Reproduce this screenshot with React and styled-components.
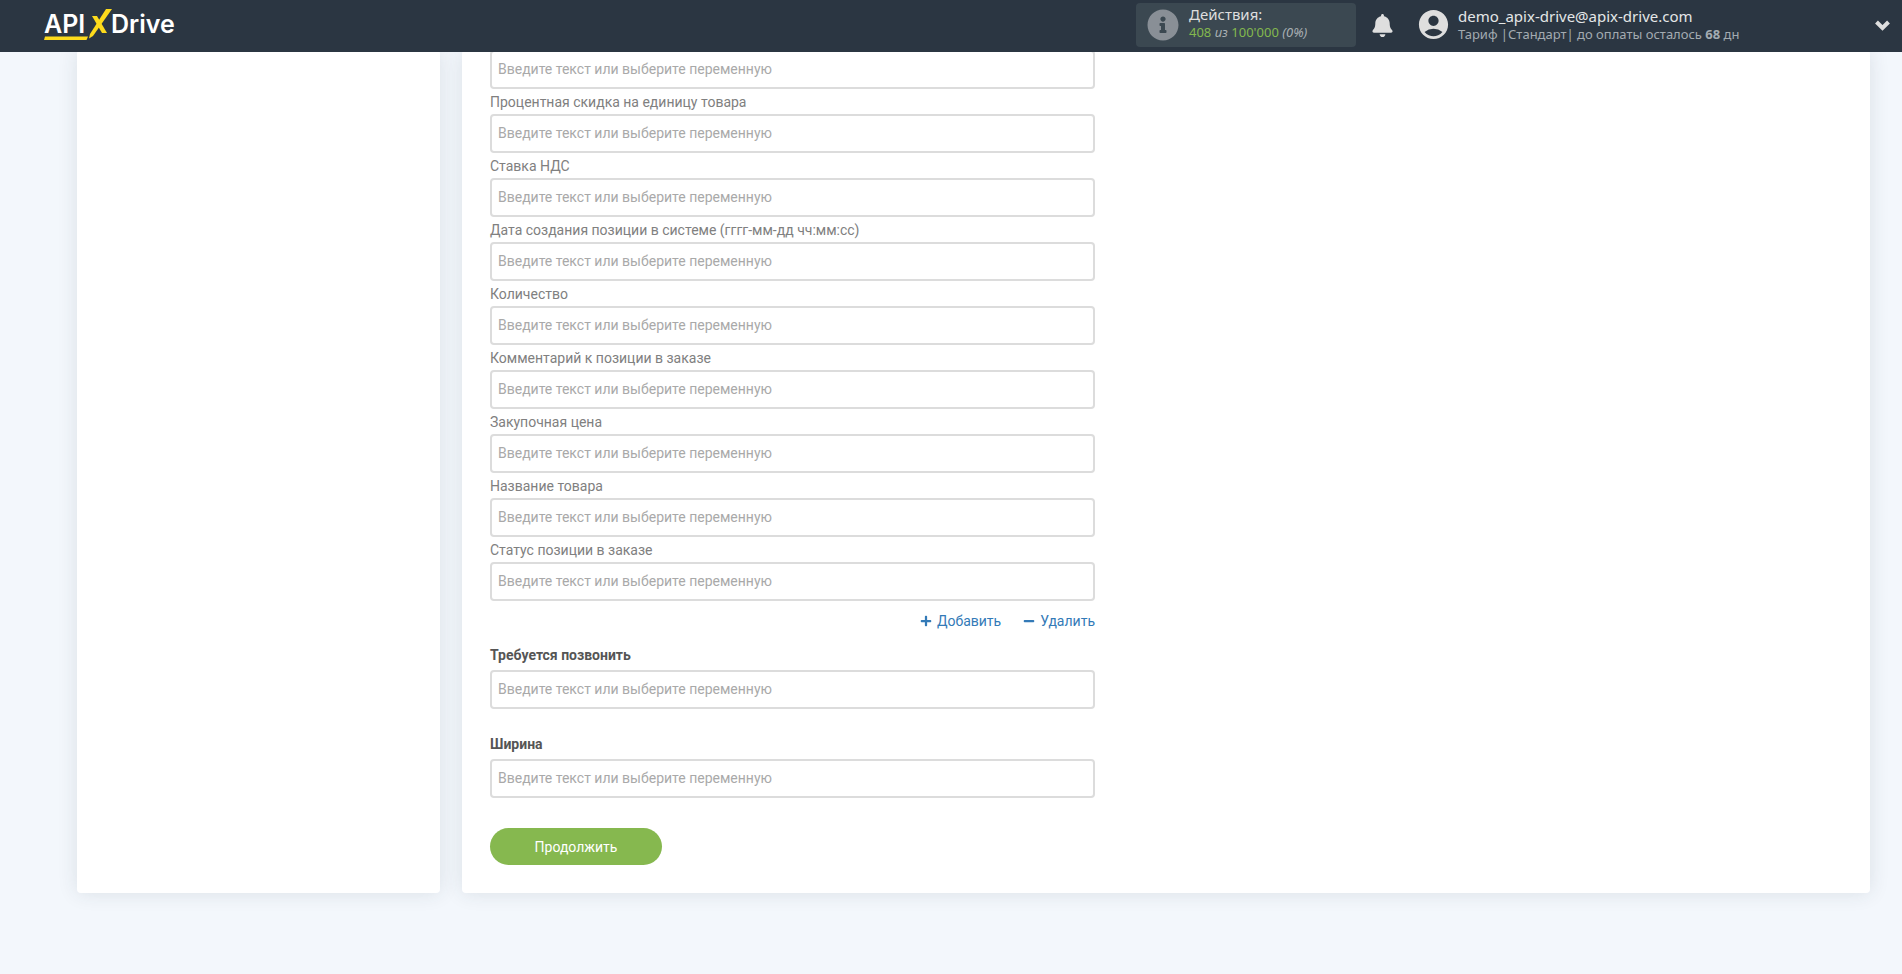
import React, { useId } from 'react'
import styled, { createGlobalStyle } from 'styled-components'
import { FaBell, FaInfoCircle, FaPlus, FaMinus } from 'react-icons/fa'
import { MdAccountCircle } from 'react-icons/md'

const itemFields = [
  'Процентная скидка на единицу товара',
  'Ставка НДС',
  'Дата создания позиции в системе (гггг-мм-дд чч:мм:сс)',
  'Количество',
  'Комментарий к позиции в заказе',
  'Закупочная цена',
  'Название товара',
  'Статус позиции в заказе',
]

const orderFields = ['Требуется позвонить', 'Ширина']

function App() {
  return (
    <>
      <GlobalStyle />
      <Header>
        <LogoLink href="#" aria-label="APIXDrive">
          <Logo />
        </LogoLink>
        <Actions>
          <InfoIcon />
          <ActionsText>
            <ActionsTitle>Действия:</ActionsTitle>
            <ActionsCount>
              <Green>408</Green> <em>из</em> <Green>100'000</Green> <em>(0%)</em>
            </ActionsCount>
          </ActionsText>
        </Actions>
        <BellButton aria-label="Уведомления">
          <FaBell />
        </BellButton>
        <Account aria-label="Аккаунт">
          <UserIcon />
          <AccountText>
            <Email>demo_apix-drive@apix-drive.com</Email>
            <Tariff>
              Тариф |Стандарт| до оплаты осталось <b>68</b> дн
            </Tariff>
          </AccountText>
          <Chevron />
        </Account>
      </Header>
      <Page>
        <Panel as="aside" />
        <Panel>
          <Form onSubmit={(e) => e.preventDefault()}>
            <Input aria-label="Скидка" placeholder="Введите текст или выберите переменную" />
            {itemFields.map((label) => (
              <ItemField key={label} label={label} />
            ))}
            <RowActions>
              <RowLink href="#">
                <FaPlus size={12} />
                Добавить
              </RowLink>
              <RowLink href="#">
                <FaMinus size={12} />
                Удалить
              </RowLink>
            </RowActions>
            {orderFields.map((label) => (
              <OrderField key={label} label={label} />
            ))}
            <Submit>Продолжить</Submit>
          </Form>
        </Panel>
      </Page>
    </>
  )
}

function ItemField({ label }) {
  const id = useId()
  return (
    <div>
      <ItemLabel htmlFor={id}>{label}</ItemLabel>
      <Input id={id} placeholder="Введите текст или выберите переменную" />
    </div>
  )
}

function OrderField({ label }) {
  const id = useId()
  return (
    <OrderRow>
      <OrderLabel htmlFor={id}>{label}</OrderLabel>
      <Input id={id} placeholder="Введите текст или выберите переменную" />
    </OrderRow>
  )
}

function Logo() {
  return (
    <svg width="136" height="32" viewBox="0 0 136 32">
      <g fill="#fff" fontFamily="Inter, sans-serif" fontSize="25" fontWeight="600">
        <text x="0" y="24">API</text>
        <text x="67" y="24">Drive</text>
      </g>
      <path d="M1 27.500h43l-1.500 3.500H0z" fill="#fddb1c" />
      <path d="M62 0h6L49 27l-4 2.500 1-4.500z" fill="#fddb1c" />
      <path d="M48 7h5l10 17h-5z" fill="#fddb1c" />
    </svg>
  )
}

function Chevron() {
  return (
    <svg width="15" height="11" viewBox="0 0 15 11" fill="none" stroke="#dedede" strokeWidth="4">
      <path d="M1.500 2l6 6 6-6" />
    </svg>
  )
}

const GlobalStyle = createGlobalStyle`
  * {
    box-sizing: border-box;
  }

  body {
    margin: 0;
    background: #f3f7fc;
    font-family: Roboto, sans-serif;
    font-size: 14px;
    line-height: 20px;
  }

  button {
    font: inherit;
    border: 0;
    cursor: pointer;
  }
`

const Header = styled.header`
  position: sticky;
  top: 0;
  z-index: 1;
  display: flex;
  align-items: center;
  height: 52px;
  padding: 0 12px 2px 44px;
  background: #2b3642;
  font-family: 'Noto Sans', sans-serif;
`

const LogoLink = styled.a`
  display: flex;
  margin-right: auto;
`

const Actions = styled.div`
  display: flex;
  align-items: center;
  gap: 10px;
  width: 220px;
  height: 44px;
  padding: 0 11px;
  border-radius: 4px;
  background: #3b4851;
`

const InfoIcon = styled(FaInfoCircle)`
  width: 32px;
  height: 32px;
  color: #898f96;
`

const ActionsText = styled.div`
  padding-bottom: 4px;
`

const ActionsTitle = styled.div`
  color: #dedede;
  font-size: 15px;
  line-height: 18px;
`

const ActionsCount = styled.div`
  color: #a9afb3;
  font-size: 13px;
  line-height: 18px;
`

const Green = styled.span`
  color: #83b84e;
`

const BellButton = styled.button`
  display: flex;
  margin: 0 22px 0 15px;
  padding: 0;
  background: none;
  color: #dedede;
  font-size: 23px;
`

const Account = styled.button`
  display: flex;
  align-items: center;
  width: 474px;
  padding: 0;
  background: none;
  text-align: left;
`

const UserIcon = styled(MdAccountCircle)`
  width: 35px;
  height: 35px;
  margin-bottom: 2px;
  color: #dedede;
`

const AccountText = styled.span`
  display: grid;
  margin: 0 auto 0 7px;
`

const Email = styled.span`
  color: #e4e6e7;
  font-size: 15px;
  line-height: 18px;
`

const Tariff = styled.span`
  color: #a3abb1;
  font-size: 13px;
  line-height: 18px;
`

const Page = styled.main`
  display: grid;
  grid-template-columns: 363px 1fr;
  gap: 22px;
  margin-top: -2px;
  padding: 0 32px 80px 77px;
`

const Panel = styled.section`
  padding: 0 28px 28px;
  border-radius: 4px;
  background: #fff;
  box-shadow: 0 0 20px rgba(43, 54, 66, 0.12);
`

const Form = styled.form`
  max-width: 605px;
`

const Input = styled.input`
  display: block;
  width: 100%;
  height: 39px;
  padding: 0 6px 2px;
  border: 2px solid #dcdcdc;
  border-radius: 4px;
  background: #fff;
  color: #555;
  font: inherit;

  &::placeholder {
    color: #a9a9a9;
    opacity: 1;
  }
`

const ItemLabel = styled.label`
  display: block;
  padding: 3px 0 2px;
  color: #808080;
`

const RowActions = styled.div`
  display: flex;
  justify-content: flex-end;
  gap: 22px;
  padding: 10px 0 14px;
`

const RowLink = styled.a`
  display: flex;
  align-items: center;
  gap: 5px;
  color: #337ab7;
  text-decoration: none;
`

const OrderRow = styled.div`
  margin-bottom: 25px;
`

const OrderLabel = styled.label`
  display: block;
  padding-bottom: 5px;
  color: #555;
  font-weight: 700;
`

const Submit = styled.button`
  width: 172px;
  height: 37px;
  margin-top: 5px;
  border-radius: 19px;
  background: #86b84f;
  color: #fff;
`

export default App
